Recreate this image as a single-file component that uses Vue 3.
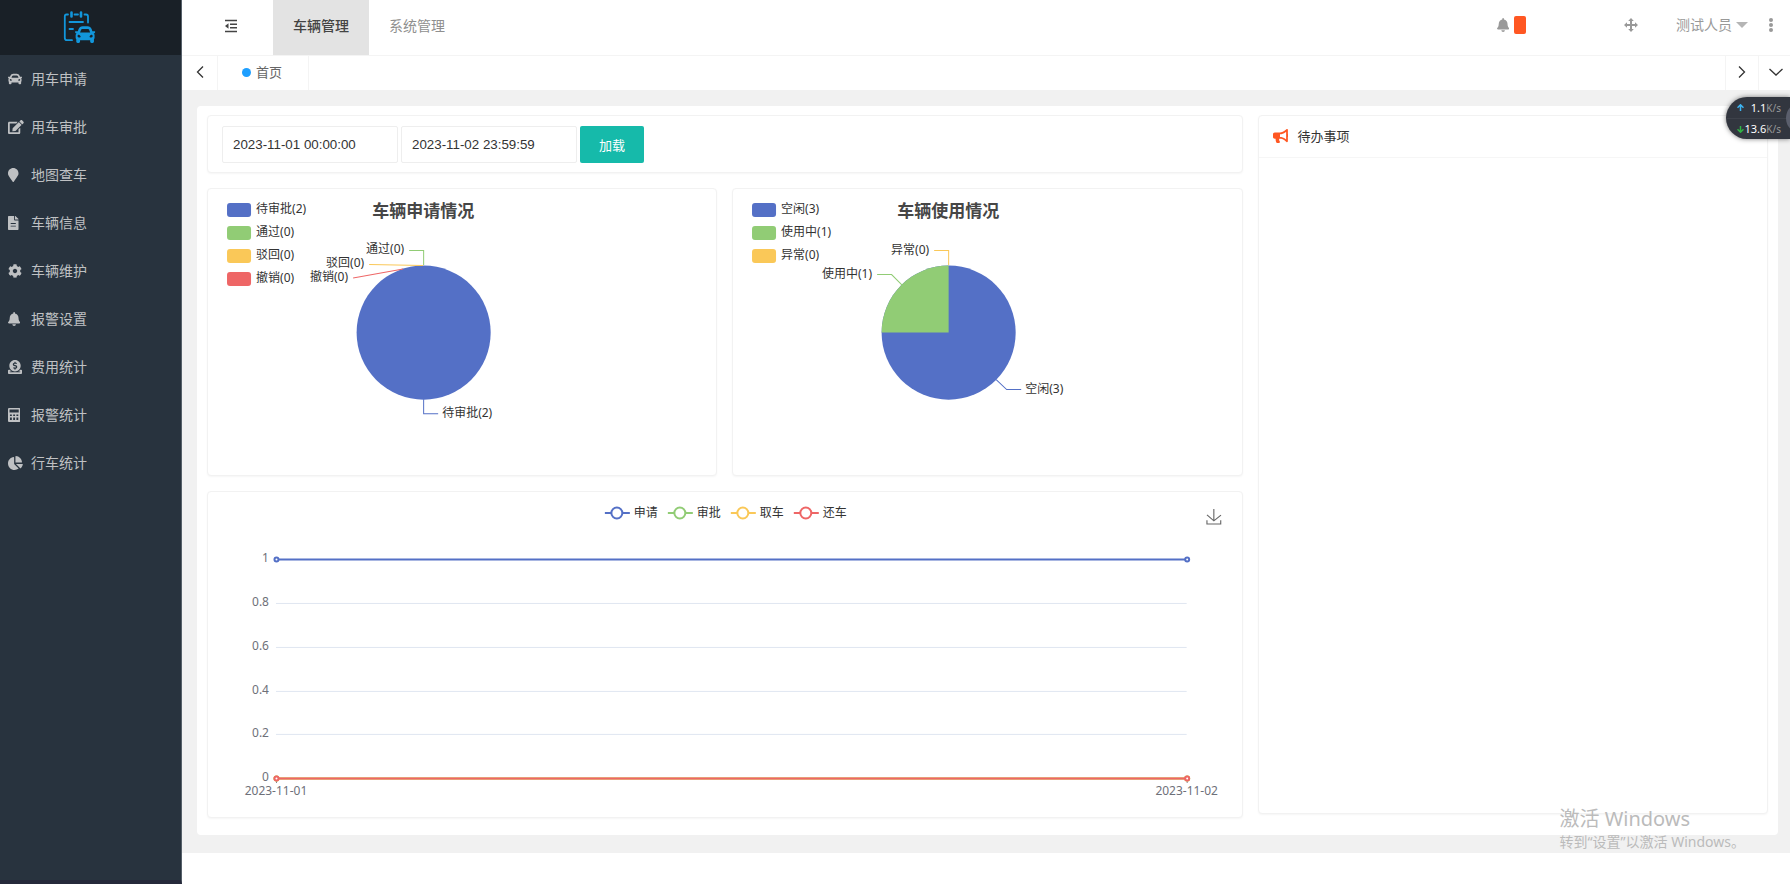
<script setup>
import { ref } from 'vue'

const icons = {
  car: { box: '0 0 512 512', d: 'M499.99 176h-59.87l-16.64-41.6C406.38 91.63 365.57 64 319.5 64h-127c-46.06 0-86.88 27.63-103.99 70.4L71.87 176H12.01C4.2 176-1.53 183.34.37 190.91l6 24C7.7 220.25 12.5 224 18.01 224h20.07C24.65 235.73 16 252.78 16 272v48c0 16.12 6.16 30.67 16 41.93V416c0 17.67 14.33 32 32 32h32c17.67 0 32-14.33 32-32v-32h256v32c0 17.67 14.33 32 32 32h32c17.67 0 32-14.33 32-32v-54.07c9.84-11.25 16-25.8 16-41.93v-48c0-19.22-8.65-36.27-22.07-48H494c5.51 0 10.31-3.75 11.64-9.09l6-24c1.89-7.57-3.84-14.91-11.65-14.91zm-352.06-17.83c7.29-18.22 24.94-30.17 44.57-30.17h127c19.63 0 37.28 11.95 44.57 30.17L384 208H128l19.93-49.83zM96 319.8c-19.2 0-32-12.76-32-31.9S76.8 256 96 256s48 28.71 48 47.85-28.8 15.95-48 15.95zm320 0c-19.2 0-48 3.19-48-15.95S396.8 256 416 256s32 12.76 32 31.9-12.8 31.9-32 31.9z' },
  edit: { box: '0 0 576 512', d: 'M402.6 83.2l90.2 90.2c3.8 3.8 3.8 10 0 13.8L274.4 405.6l-92.8 10.3c-12.4 1.4-22.9-9.1-21.5-21.5l10.3-92.8L388.8 83.2c3.8-3.8 10-3.8 13.8 0zm162-22.9l-48.8-48.8c-15.2-15.2-39.9-15.2-55.2 0l-35.4 35.4c-3.8 3.8-3.8 10 0 13.8l90.2 90.2c3.8 3.8 10 3.8 13.8 0l35.4-35.4c15.2-15.3 15.2-40 0-55.2zM384 346.2V448H64V128h229.8c3.2 0 6.2-1.3 8.5-3.5l40-40c7.6-7.6 2.2-20.5-8.5-20.5H48C21.5 64 0 85.5 0 112v352c0 26.5 21.5 48 48 48h352c26.5 0 48-21.5 48-48V306.2c0-10.7-12.9-16-20.5-8.5l-40 40c-2.2 2.3-3.5 5.3-3.5 8.5z' },
  marker: { box: '0 0 384 512', d: 'M172.268 501.67C26.97 291.031 0 269.413 0 192 0 85.961 85.961 0 192 0s192 85.961 192 192c0 77.413-26.97 99.031-172.268 309.67-9.535 13.774-29.93 13.773-39.464 0z' },
  file: { box: '0 0 384 512', d: 'M224 136V0H24C10.7 0 0 10.7 0 24v464c0 13.3 10.7 24 24 24h336c13.3 0 24-10.7 24-24V160H248c-13.2 0-24-10.8-24-24zm64 236c0 6.6-5.4 12-12 12H108c-6.6 0-12-5.4-12-12v-8c0-6.6 5.4-12 12-12h168c6.6 0 12 5.4 12 12v8zm0-96c0 6.6-5.4 12-12 12H108c-6.6 0-12-5.4-12-12v-8c0-6.6 5.4-12 12-12h168c6.6 0 12 5.4 12 12v8zM384 121.9v6.1H256V0h6.1c6.4 0 12.5 2.5 17 7l97.9 98c4.5 4.5 7 10.6 7 16.9z' },
  cog: { box: '0 0 512 512', d: 'M487.4 315.7l-42.6-24.6c4.3-23.2 4.3-47 0-70.2l42.6-24.6c4.9-2.8 7.1-8.6 5.5-14-11.1-35.6-30-67.8-54.7-94.6-3.8-4.1-10-5.1-14.8-2.3L380.8 110c-17.9-15.4-38.5-27.3-60.8-35.1V25.8c0-5.6-3.9-10.5-9.4-11.7-36.7-8.2-74.3-7.8-109.2 0-5.5 1.2-9.4 6.1-9.4 11.7V75c-22.2 7.9-42.8 19.8-60.8 35.1L88.7 85.5c-4.9-2.8-11-1.9-14.8 2.3-24.7 26.7-43.6 58.9-54.7 94.6-1.7 5.4.6 11.2 5.5 14L67.3 221c-4.3 23.2-4.3 47 0 70.2l-42.6 24.6c-4.9 2.8-7.1 8.6-5.5 14 11.1 35.6 30 67.8 54.7 94.6 3.8 4.1 10 5.1 14.8 2.3l42.6-24.6c17.9 15.4 38.5 27.3 60.8 35.1v49.2c0 5.6 3.9 10.5 9.4 11.7 36.7 8.2 74.3 7.8 109.2 0 5.5-1.2 9.4-6.1 9.4-11.7v-49.2c22.2-7.9 42.8-19.8 60.8-35.1l42.6 24.6c4.9 2.8 11 1.9 14.8-2.3 24.7-26.7 43.6-58.9 54.7-94.6 1.5-5.5-.7-11.3-5.6-14.1zM256 336c-44.1 0-80-35.9-80-80s35.9-80 80-80 80 35.9 80 80-35.9 80-80 80z' },
  bell: { box: '0 0 448 512', d: 'M224 512c35.32 0 63.97-28.65 63.97-64H160.03c0 35.35 28.65 64 63.97 64zm215.39-149.71c-19.32-20.76-55.47-51.99-55.47-154.29 0-77.7-54.48-139.9-127.94-155.16V32c0-17.67-14.32-32-31.98-32s-31.98 14.33-31.98 32v20.84C118.56 68.1 64.08 130.3 64.08 208c0 102.3-36.15 133.53-55.47 154.29-6 6.45-8.66 14.16-8.61 21.71.11 16.4 12.98 32 32.1 32h383.8c19.12 0 32-15.6 32.1-32 .05-7.55-2.61-15.27-8.61-21.71z' },
  donate: { box: '0 0 512 512', d: 'M256 416c114.9 0 208-93.1 208-208S370.900 0 256 0 48 93.100 48 208s93.100 208 208 208zM233.800 97.400V80.600c0-9.200 7.400-16.600 16.600-16.600h11.100c9.200 0 16.600 7.400 16.600 16.600v17c15.500.8 30.500 6.100 43 15.400 5.600 4.100 6.200 12.300 1.200 17.100L306 145.600c-3.800 3.700-9.500 3.800-14 1-5.400-3.400-11.400-5.100-17.800-5.100h-38.900c-9 0-16.300 8.200-16.300 18.300 0 8.200 5 15.500 12.100 17.600l62.300 18.700c25.700 7.700 43.700 32.400 43.700 60.100 0 34-26.400 61.500-59.100 62.400v16.800c0 9.200-7.400 16.600-16.600 16.600h-11.100c-9.200 0-16.600-7.400-16.600-16.600v-17c-15.500-.8-30.500-6.100-43-15.400-5.600-4.100-6.200-12.300-1.200-17.100l16.300-15.500c3.800-3.700 9.500-3.800 14-1 5.400 3.400 11.400 5.100 17.800 5.100h38.900c9 0 16.300-8.200 16.300-18.300 0-8.200-5-15.500-12.100-17.600l-62.300-18.700c-25.700-7.700-43.700-32.400-43.700-60.100.1-34 26.400-61.500 59.100-62.400zM480 352h-32.500c-19.600 26-44.600 47.700-73 64h63.800c5.300 0 9.600 3.600 9.600 8v16c0 4.400-4.300 8-9.600 8H73.600c-5.300 0-9.600-3.600-9.600-8v-16c0-4.400 4.300-8 9.600-8h63.800c-28.400-16.300-53.300-38-73-64H32c-17.700 0-32 14.300-32 32v96c0 17.700 14.300 32 32 32h448c17.700 0 32-14.300 32-32v-96c0-17.700-14.300-32-32-32z' },
  calc: { box: '0 0 448 512', d: 'M40 0h368a40 40 0 0 1 40 40v432a40 40 0 0 1-40 40H40a40 40 0 0 1-40-40V40A40 40 0 0 1 40 0zM56 56v110h336V56zM72 236v52h68v-52zm118 0v52h68v-52zm118 0v52h68v-52zM72 348v90h68v-90zm118 0v90h68v-90zm118 0v90h68v-90z' },
  pie: { box: '0 0 544 512', d: 'M527.79 288H290.5l158.03 158.03c6.04 6.04 15.98 6.53 22.19.68 38.7-36.46 65.32-85.61 73.13-140.86 1.34-9.46-6.51-17.85-16.06-17.85zm-15.83-64.8C503.72 103.74 408.26 8.28 288.8.04 279.68-.59 272 7.1 272 16.24V240h223.77c9.14 0 16.82-7.68 16.19-16.8zM224 288V50.71c0-9.55-8.39-17.4-17.84-16.06C86.99 51.49-4.1 155.6.14 280.37 4.5 408.51 114.83 513.59 243.03 511.98c50.4-.63 96.97-16.87 135.26-44.03 7.9-5.6 8.42-17.23 1.57-24.08L224 288z' },
  horn: { box: '0 0 576 512', d: 'M576 240c0-23.63-12.95-44.04-32-55.12V32.01C544 23.26 537.02 0 512 0c-7.12 0-14.19 2.38-19.98 7.02l-85.03 68.03C364.28 109.19 310.66 128 256 128H64c-35.35 0-64 28.65-64 64v96c0 35.35 28.65 64 64 64h33.7c-1.39 10.48-2.18 21.14-2.18 32 0 39.77 9.26 77.35 25.56 110.94 5.19 10.69 16.52 17.06 28.4 17.06h74.28c26.05 0 41.69-29.84 25.9-50.56-16.4-21.52-26.15-48.36-26.15-77.44 0-11.11 1.62-21.79 4.41-32H256c54.66 0 108.28 18.81 150.98 52.95l85.03 68.03a32.023 32.023 0 0 0 19.98 7.02c24.92 0 32-22.78 32-32V295.13C563.05 284.04 576 263.63 576 240zm-96 141.42l-33.05-26.44C392.95 311.78 325.12 288 256 288v-96c69.12 0 136.95-23.78 190.95-66.98L480 98.58v282.84z' }
}

const menu = [
  ['car', '用车申请'],
  ['edit', '用车审批'],
  ['marker', '地图查车'],
  ['file', '车辆信息'],
  ['cog', '车辆维护'],
  ['bell', '报警设置'],
  ['donate', '费用统计'],
  ['calc', '报警统计'],
  ['pie', '行车统计']
]

const start = ref('2023-11-01 00:00:00')
const end = ref('2023-11-02 23:59:59')

const blue = '#5470c6'
const green = '#91cc75'
const yellow = '#fac858'
const red = '#ee6666'

const pies = [
  {
    title: '车辆申请情况',
    legend: [['待审批(2)', blue], ['通过(0)', green], ['驳回(0)', yellow], ['撤销(0)', red]],
    slice: '',
    labels: [
      { text: '通过(0)', x: 196, y: 60, anchor: 'end', color: green, line: '201,61.5 215.500,61.5 215.500,76' },
      { text: '驳回(0)', x: 156, y: 74, anchor: 'end', color: yellow, line: '161,75.500 215,76.500' },
      { text: '撤销(0)', x: 140, y: 88, anchor: 'end', color: red, line: '145,89 195,80' },
      { text: '待审批(2)', x: 234, y: 224, anchor: 'start', color: blue, line: '215.500,210 215.500,224.500 230,224.500' }
    ]
  },
  {
    title: '车辆使用情况',
    legend: [['空闲(3)', blue], ['使用中(1)', green], ['异常(0)', yellow]],
    slice: 'M215.500 143.500H148.500A67 67 0 0 1 215.500 76.500Z',
    labels: [
      { text: '异常(0)', x: 196, y: 61, anchor: 'end', color: yellow, line: '201,61.5 215.500,61.5 215.500,76' },
      { text: '使用中(1)', x: 139, y: 85, anchor: 'end', color: green, line: '144,85.5 158.500,85.5 169,96' },
      { text: '空闲(3)', x: 292, y: 200, anchor: 'start', color: blue, line: '263,190.5 273.500,200.500 288,200.500' }
    ]
  }
]

const series = [['申请', blue, 67], ['审批', green, 286], ['取车', yellow, 286], ['还车', red, 286]]
const ticks = [['1', 67], ['0.8', 111], ['0.6', 155], ['0.4', 199], ['0.2', 242], ['0', 286]]
const dates = [['2023-11-01', 68], ['2023-11-02', 979]]
</script>

<template>
  <div class="layout">
    <aside class="side">
      <div class="logo">
        <svg width="34" height="34" viewBox="62 10 34 34" fill="none" stroke="#1296db" stroke-width="1.800" stroke-linecap="round">
          <path d="M68 14.500H66.500Q64.800 14.500 64.800 16.500V38Q64.800 40.200 67 40.200H72M74.500 14.500h3.500M84.500 14.500h1.500q2 0 2 2v6M69.500 22H83M69.500 29h3.500" />
          <path d="M71.500 12.500v4M81 12.500v4" stroke-width="2.600" />
          <g transform="translate(75 23.500) scale(.0395 .0435)"><path :d="icons.car.d" fill="#1296db" stroke="none" /></g>
        </svg>
      </div>
      <nav class="menu">
        <a v-for="[icon, label] in menu" :key="label" href="#" class="menu-item">
          <span class="menu-icon"><svg height="14" :viewBox="icons[icon].box" fill="currentColor" fill-rule="evenodd"><path :d="icons[icon].d" /></svg></span>
          <span>{{ label }}</span>
        </a>
      </nav>
    </aside>

    <div class="main">
      <header class="top">
        <button class="fold" aria-label="收起菜单">
          <svg width="14" height="14" viewBox="0 0 14 14" fill="none" stroke="#444" stroke-width="1.500"><path d="M1 1.500h12M6 5.200h7M6 8.800h7M1 12.500h12" /><path d="M4.500 4.200v5.600L1 7z" fill="#444" stroke="none" /></svg>
        </button>
        <nav class="nav">
          <a href="#" class="nav-item active">车辆管理</a>
          <a href="#" class="nav-item">系统管理</a>
        </nav>
        <div class="tools">
          <button class="tool notice" aria-label="消息">
            <svg height="14" :viewBox="icons.bell.box" fill="currentColor"><path :d="icons.bell.d" /></svg>
            <span class="badge"></span>
          </button>
          <button class="tool move" aria-label="全屏">
            <svg width="14" height="14" viewBox="0 0 14 14" fill="currentColor"><path d="M7 0l2.800 3H8v3h3V4.200L14 7l-3 2.800V8H8v3h1.800L7 14l-2.800-3H6V8H3v1.800L0 7l3-2.800V6h3V3H4.200z" /></svg>
          </button>
          <button class="tool user">测试人员<svg width="12" height="6" viewBox="0 0 12 6" fill="#b5b5b5"><path d="M0 0h12L6 6z" /></svg></button>
          <button class="tool" aria-label="更多">
            <svg width="4" height="14" viewBox="0 0 4 14" fill="currentColor"><circle cx="2" cy="2" r="2" /><circle cx="2" cy="7" r="2" /><circle cx="2" cy="12" r="2" /></svg>
          </button>
        </div>
      </header>

      <div class="tabs">
        <button class="tab-btn prev" aria-label="向左"><svg width="8" height="12" viewBox="0 0 8 12"><path d="M7 .5L1.500 6 7 11.500" /></svg></button>
        <a href="#" class="tab"><i class="dot"></i>首页</a>
        <button class="tab-btn next" aria-label="向右"><svg width="8" height="12" viewBox="0 0 8 12"><path d="M1 .5L6.500 6 1 11.500" /></svg></button>
        <button class="tab-btn more" aria-label="标签操作"><svg width="14" height="8" viewBox="0 0 14 8"><path d="M.5 1L7 7l6.500-6" /></svg></button>
      </div>

      <main class="page">
        <div class="board">
          <div class="left">
            <form class="card filter" @submit.prevent>
              <input v-model="start" type="text" aria-label="开始时间" />
              <input v-model="end" type="text" aria-label="结束时间" />
              <button class="load">加载</button>
            </form>

            <div class="pies">
              <section v-for="pie in pies" :key="pie.title" class="card">
                <svg class="chart" viewBox="0 0 508 286">
                  <g v-for="([name, color], i) in pie.legend" :key="name">
                    <rect x="19" :y="14 + i * 23" width="24" height="14" rx="3" :fill="color" />
                    <text x="48" :y="24 + i * 23">{{ name }}</text>
                  </g>
                  <text class="title" x="215" y="28" text-anchor="middle">{{ pie.title }}</text>
                  <circle cx="215.500" cy="143.500" r="67" :fill="blue" />
                  <path v-if="pie.slice" :d="pie.slice" :fill="green" />
                  <g v-for="l in pie.labels" :key="l.text">
                    <polyline :points="l.line" fill="none" :stroke="l.color" />
                    <text :x="l.x" :y="l.y + 4" :text-anchor="l.anchor">{{ l.text }}</text>
                  </g>
                </svg>
              </section>
            </div>

            <section class="card">
              <svg class="chart" viewBox="0 0 1034 325">
                <g v-for="([name, color], i) in series" :key="name">
                  <path :d="`M${397 + i * 63} 21h25`" :stroke="color" stroke-width="2" />
                  <circle :cx="409 + i * 63" cy="21" r="5.500" fill="#fff" :stroke="color" stroke-width="2" />
                  <text :x="426 + i * 63" y="25">{{ name }}</text>
                </g>
                <g transform="translate(998 17) scale(.28 .26)" fill="none" stroke="#666" stroke-width="4">
                  <path d="M4.700,22.900L29.300,45.500L54.700,23.400M4.600,43.600L4.600,58L53.800,58L53.800,43.600M29.200,45.100L29.200,0" />
                </g>
                <g v-for="[label, y] in ticks" :key="label" class="axis">
                  <path :d="`M68 ${y + .5}H979`" stroke="#e0e6f1" />
                  <text x="61" :y="y + 3" text-anchor="end">{{ label }}</text>
                </g>
                <g v-for="[date, x] in dates" :key="date" class="axis">
                  <path :d="`M${x + .5} 286v5`" stroke="#6e7079" />
                  <text :x="x" y="303" text-anchor="middle">{{ date }}</text>
                </g>
                <g v-for="[name, color, y] in series" :key="name" :stroke="color" stroke-width="2">
                  <path :d="`M68 ${y + .5}H979`" />
                  <circle v-for="x in [68, 979]" :key="x" :cx="x + .5" :cy="y + .5" r="2" fill="#fff" />
                </g>
              </svg>
            </section>
          </div>

          <section class="card todo">
            <h2><svg height="14" :viewBox="icons.horn.box" fill="#ff5722"><path :d="icons.horn.d" /></svg>待办事项</h2>
          </section>
        </div>
      </main>
    </div>

    <div class="speed">
      <div class="rates">
        <div class="rate"><svg width="7" height="7" viewBox="0 0 7 7" stroke="#3db4f2"><path d="M3.500 7V1M.5 3.800l3-3 3 3" /></svg><b>1.1</b><span>K/s</span></div>
        <div class="rate"><svg width="7" height="7" viewBox="0 0 7 7" stroke="#2fb344"><path d="M3.500 0v6M.5 3.200l3 3 3-3" /></svg><b>13.6</b><span>K/s</span></div>
      </div>
      <i class="knob"></i>
    </div>
    <div class="watermark">
      <p class="wm-title">激活 Windows</p>
      <p>转到“设置”以激活 Windows。</p>
    </div>
  </div>
</template>

<style>
body { margin: 0; background: #fff; }
</style>

<style scoped>
* { box-sizing: border-box; }
.layout {
  position: relative;
  display: flex;
  min-height: 100vh;
  overflow: hidden;
  font: 14px/20px "Noto Sans", "Noto Sans CJK SC", sans-serif;
  color: #333;
}
a { color: inherit; text-decoration: none; }
button { font: inherit; color: inherit; background: none; border: 0; padding: 0; cursor: pointer; }
svg { display: block; flex: none; }

.side { flex: none; width: 182px; background: #28333e; border-right: 1px solid #56606a; border-bottom: 4px solid #25293a; }
.logo { height: 55px; padding: 10px 0 0 62px; background: #192027; }
.menu-item { display: flex; align-items: center; height: 48px; padding-left: 8px; color: #bfc1c3; }
.menu-icon { width: 23px; }

.main { flex: 1; min-width: 0; }
.top { display: flex; align-items: center; height: 56px; border-bottom: 1px solid #f4f4f4; padding-right: 17px; }
.fold { display: flex; align-items: center; justify-content: center; align-self: stretch; width: 91px; padding: 0 0 3px 6px; }
.nav { display: flex; align-self: stretch; }
.nav-item { display: flex; align-items: center; padding: 0 20px 4px; color: #8f8f8f; }
.nav-item.active { background: #e3e3e3; color: #444; font-weight: 500; }
.tools { display: flex; align-items: center; margin: 0 0 5px auto; color: #999; }
.tool { display: flex; align-items: center; }
.notice { gap: 5px; margin-right: 98px; }
.badge { width: 12px; height: 18px; background: #ff5722; border-radius: 2px; }
.move { margin-right: 38px; }
.user { gap: 4px; margin-right: 21px; }

.tabs { display: flex; height: 34px; background: #fff; }
.tab-btn { display: flex; align-items: center; justify-content: center; width: 33px; padding-bottom: 2px; border-left: 1px solid #f4f4f4; }
.tab-btn path { fill: none; stroke: #333; stroke-width: 1.3; }
.prev { width: 36px; border-left: 0; border-right: 1px solid #f4f4f4; }
.next { margin-left: auto; }
.more { width: 32px; padding-left: 3px; }
.tab { display: flex; align-items: center; gap: 5px; padding: 0 26px 2px 24px; font-size: 13px; color: #666; border-right: 1px solid #f4f4f4; }
.dot { width: 9px; height: 9px; border-radius: 50%; background: #1e9fff; }

.page { background: #f1f1f1; padding: 16px 12px 18px 15px; }
.board { display: grid; grid-template-columns: repeat(3, minmax(0, 1fr)); gap: 15px; padding: 9px 10px 17px; background: #fff; border-radius: 4px; }
.left { grid-column: span 2; display: flex; flex-direction: column; gap: 15px; }
.card { border: 1px solid #f2f2f2; border-radius: 4px; background: #fff; box-shadow: 0 1px 2px rgba(0, 0, 0, .04); }
.filter { display: flex; gap: 3px; padding: 10px 14px 9px; }
.filter input { width: 176px; height: 37px; padding: 0 10px; font-family: "Liberation Sans", Arial, sans-serif; color: #333; border: 1px solid #eee; border-radius: 2px; background: #fff; }
.load { width: 64px; height: 37px; background: #16baaa; color: #fff; border-radius: 2px; font-size: 13px; }
.pies { display: grid; grid-template-columns: 1fr 1fr; gap: 15px; }
.chart { width: 100%; height: auto; font-size: 12px; fill: #333; }
.chart .title { font-size: 17px; font-weight: 700; fill: #464646; }
.axis text { fill: #6e7079; }
.todo { margin-bottom: 4px; }
.todo h2 { display: flex; align-items: center; gap: 9px; height: 42px; margin: 0; padding: 0 0 2px 14px; font-size: 13px; font-weight: 400; border-bottom: 1px solid #f6f6f6; }

.speed { position: absolute; top: 97px; right: 0; width: 64px; height: 42px; overflow: hidden; background: #32363f; border-radius: 21px 0 0 21px; box-shadow: 0 0 5px rgba(0, 0, 0, .5); }
.rates { display: grid; grid-template-rows: 1fr 1fr; height: 42px; }
.rate { display: flex; align-items: center; padding: 0 9px 0 11px; font-size: 11px; color: #999; }
.rate + .rate { border-top: 1px solid #3d414a; }
.rate path { fill: none; stroke-width: 1.5; }
.rate b { flex: 1; text-align: right; font-weight: 400; color: #fff; }
.rate span { font-size: 10px; }
.knob { position: absolute; top: 5px; left: 60px; width: 32px; height: 32px; border-radius: 50%; background: #5a5e6c; }
.watermark { position: absolute; right: 45px; bottom: 31px; color: #bbb; font-size: 14px; pointer-events: none; }
.watermark p { margin: 0; line-height: 22px; }
.watermark .wm-title { font-size: 20px; line-height: 24px; }
</style>
